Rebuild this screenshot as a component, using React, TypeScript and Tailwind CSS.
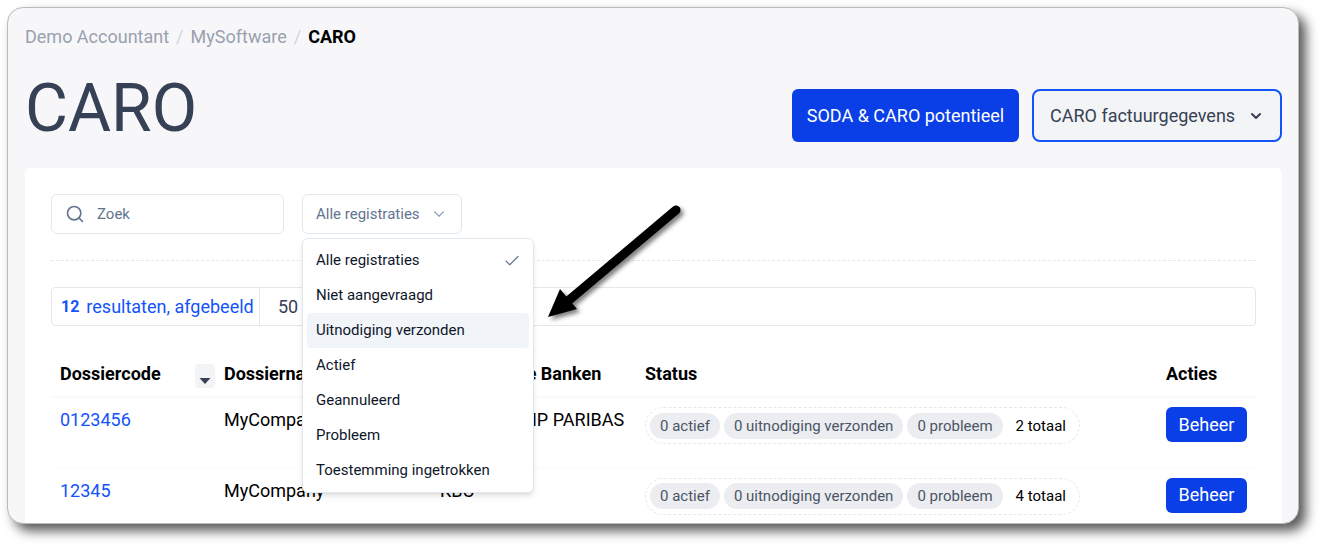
import { useState } from 'react'
import { Check, ChevronDown, Search } from 'lucide-react'

// ── Data ──────────────────────────────────────────────────────────────────────

const FILTERS = [
  'Alle registraties',
  'Niet aangevraagd',
  'Uitnodiging verzonden',
  'Actief',
  'Geannuleerd',
  'Probleem',
  'Toestemming ingetrokken',
]

const ROWS = [
  { code: '0123456', name: 'MyCompany', banks: 'BELFIUS BNP PARIBAS', total: 2 },
  { code: '12345',   name: 'MyCompany', banks: 'KBC',                 total: 4 },
]

const STATUSES = ['0 actief', '0 uitnodiging verzonden', '0 probleem']

// ── Parts ─────────────────────────────────────────────────────────────────────

function PointerArrow() {
  return (
    <svg
      className="absolute left-[240px] top-2 z-30 pointer-events-none drop-shadow-[3px_3px_2px_rgba(0,0,0,0.5)]"
      width="150" height="125" viewBox="0 0 150 125" aria-hidden="true"
    >
      <line x1="134" y1="8" x2="26" y2="99" stroke="#000" strokeWidth="9" strokeLinecap="round" />
      <polygon points="6,115 18,87 35,107" fill="#000" />
    </svg>
  )
}

function Breadcrumb() {
  return (
    <nav aria-label="Kruimelpad" className="flex gap-[7px] text-lg leading-6 text-gray-400">
      <a href="#accountant">Demo Accountant</a>
      <span className="text-gray-300">/</span>
      <a href="#software">MySoftware</a>
      <span className="text-gray-300">/</span>
      <span className="font-bold text-black" aria-current="page">CARO</span>
    </nav>
  )
}

function StatusFilter() {
  const [open, setOpen] = useState(true)
  const [selected, setSelected] = useState(FILTERS[0])
  const [hovered, setHovered] = useState(FILTERS[2])

  return (
    <div className="relative">
      <button
        type="button"
        aria-haspopup="listbox"
        aria-expanded={open}
        onClick={() => setOpen(!open)}
        className="flex h-10 w-40 items-center justify-between rounded-md border border-slate-200
          bg-white px-[13px] text-[15px] text-slate-500"
      >
        {selected}
        <ChevronDown size={18} strokeWidth={1.5} className="text-slate-400" />
      </button>

      {open && (
        <ul
          role="listbox"
          aria-label="Registraties"
          className="absolute left-0 top-11 z-20 w-[232px] rounded-md border border-slate-200
            bg-white p-1 text-[15px] text-slate-900 shadow-md"
        >
          {FILTERS.map(item => (
            <li
              key={item}
              role="option"
              aria-selected={item === selected}
              onMouseEnter={() => setHovered(item)}
              onClick={() => { setSelected(item); setOpen(false) }}
              className={`flex h-[35px] items-center justify-between rounded-sm pl-[9px] pr-2
                ${item === hovered ? 'bg-slate-100' : ''}`}
            >
              {item}
              {item === selected && <Check size={18} strokeWidth={1.5} className="text-slate-500" />}
            </li>
          ))}
        </ul>
      )}

      <PointerArrow />
    </div>
  )
}

function ResultsBar() {
  return (
    <div className="flex h-[39px] items-stretch rounded-sm border border-gray-200 text-lg">
      <p className="flex w-[208px] items-center gap-[7px] whitespace-nowrap border-r border-gray-200 pl-[9px] text-[#1353fb]">
        <strong className="text-base font-bold">12</strong>
        resultaten, afgebeeld
      </p>
      <select
        aria-label="Resultaten per pagina"
        defaultValue="50"
        className="appearance-none bg-transparent px-[18px] text-gray-700"
      >
        <option>25</option>
        <option>50</option>
        <option>100</option>
      </select>
    </div>
  )
}

function DossierTable() {
  return (
    <table className="w-full table-fixed border-collapse text-lg leading-7 text-black">
      <colgroup>
        <col className="w-[164px]" />
        <col className="w-[216px]" />
        <col className="w-[205px]" />
        <col />
        <col className="w-[99px]" />
      </colgroup>
      <thead>
        <tr className="h-[45px] border-b-2 border-gray-50 text-left font-bold">
          <th className="pl-[9px]">
            <div className="flex items-center justify-between">
              Dossiercode
              <button
                type="button"
                aria-label="Sorteer op dossiercode"
                className="mt-1 flex h-6 w-5 items-end justify-center rounded-sm bg-gray-100 pb-1"
              >
                <svg width="12" height="6" viewBox="0 0 12 6" className="fill-gray-700">
                  <path d="M0.500 0h11L6 6z" />
                </svg>
              </button>
            </div>
          </th>
          <th className="pl-[9px]">Dossiernaam</th>
          <th className="whitespace-nowrap pl-[9px]">Gekoppelde Banken</th>
          <th className="pl-[9px]">Status</th>
          <th className="pl-[9px]">Acties</th>
        </tr>
      </thead>
      <tbody>
        {ROWS.map(row => (
          <tr key={row.code} className="h-[71px] border-b border-gray-50 align-top">
            <td className="pl-[9px] pt-2">
              <a href={`#${row.code}`} className="text-[#1353fb]">{row.code}</a>
            </td>
            <td className="pl-[9px] pt-2">{row.name}</td>
            <td className="whitespace-nowrap pl-[9px] pt-2">{row.banks}</td>
            <td className="pl-[9px] pt-[9px]">
              <div className="inline-flex h-[37px] items-center gap-1 rounded-full border border-dashed
                border-gray-200 px-1 align-top text-[15px]">
                {STATUSES.map(status => (
                  <span key={status} className="flex h-[26px] items-center rounded-full bg-[#ecedf1] px-[10px] text-gray-600">
                    {status}
                  </span>
                ))}
                <span className="px-[9px]">{row.total} totaal</span>
              </div>
            </td>
            <td className="pl-[9px] pt-[9px]">
              <button
                type="button"
                className="flex h-[35px] w-[81px] items-center justify-center rounded-md bg-[#0a3fe8] text-white"
              >
                Beheer
              </button>
            </td>
          </tr>
        ))}
      </tbody>
    </table>
  )
}

// ── Page ──────────────────────────────────────────────────────────────────────

export default function App() {
  return (
    <div className="h-screen bg-white pb-[23px] pl-[7px] pr-[23px] pt-[7px] font-['Roboto',sans-serif]">
      <main className="h-full overflow-hidden rounded-2xl border border-[#bbb] bg-[#f7f7f9] pl-[17px] pr-4 pt-[17px]
        shadow-[7px_7px_12px_rgba(0,0,0,0.65)]">
        <Breadcrumb />

        <header className="flex items-center justify-between pb-5 pt-5">
          <h1 className="text-[66px] leading-[79px] text-[#374155]">CARO</h1>
          <div className="flex gap-[13px] pt-3.5 text-lg">
            <button type="button" className="h-[53px] w-[227px] rounded-md bg-[#0a3fe8] text-white">
              SODA &amp; CARO potentieel
            </button>
            <button
              type="button"
              aria-haspopup="menu"
              className="flex h-[53px] w-[250px] items-center justify-between rounded-lg border-2 border-[#1353fb] bg-gray-100 px-4 text-gray-700"
            >
              CARO factuurgegevens
              <ChevronDown size={16} strokeWidth={3} />
            </button>
          </div>
        </header>

        <section className="min-h-full rounded-md bg-white px-[26px] pt-[26px]">
          <div className="flex gap-[18px] border-b border-dashed border-gray-200 pb-[26px]">
            <label className="flex h-10 w-[233px] items-center gap-3 rounded-md border border-slate-200 px-[13px] text-slate-500">
              <Search size={20} strokeWidth={2} className="shrink-0" />
              <input
                type="search"
                aria-label="Zoek"
                placeholder="Zoek"
                className="w-full min-w-0 text-[15px] outline-none placeholder:text-slate-500"
              />
            </label>
            <StatusFilter />
          </div>

          <div className="pb-[26px] pt-[26px]">
            <ResultsBar />
          </div>
          <DossierTable />
        </section>
      </main>
    </div>
  )
}
